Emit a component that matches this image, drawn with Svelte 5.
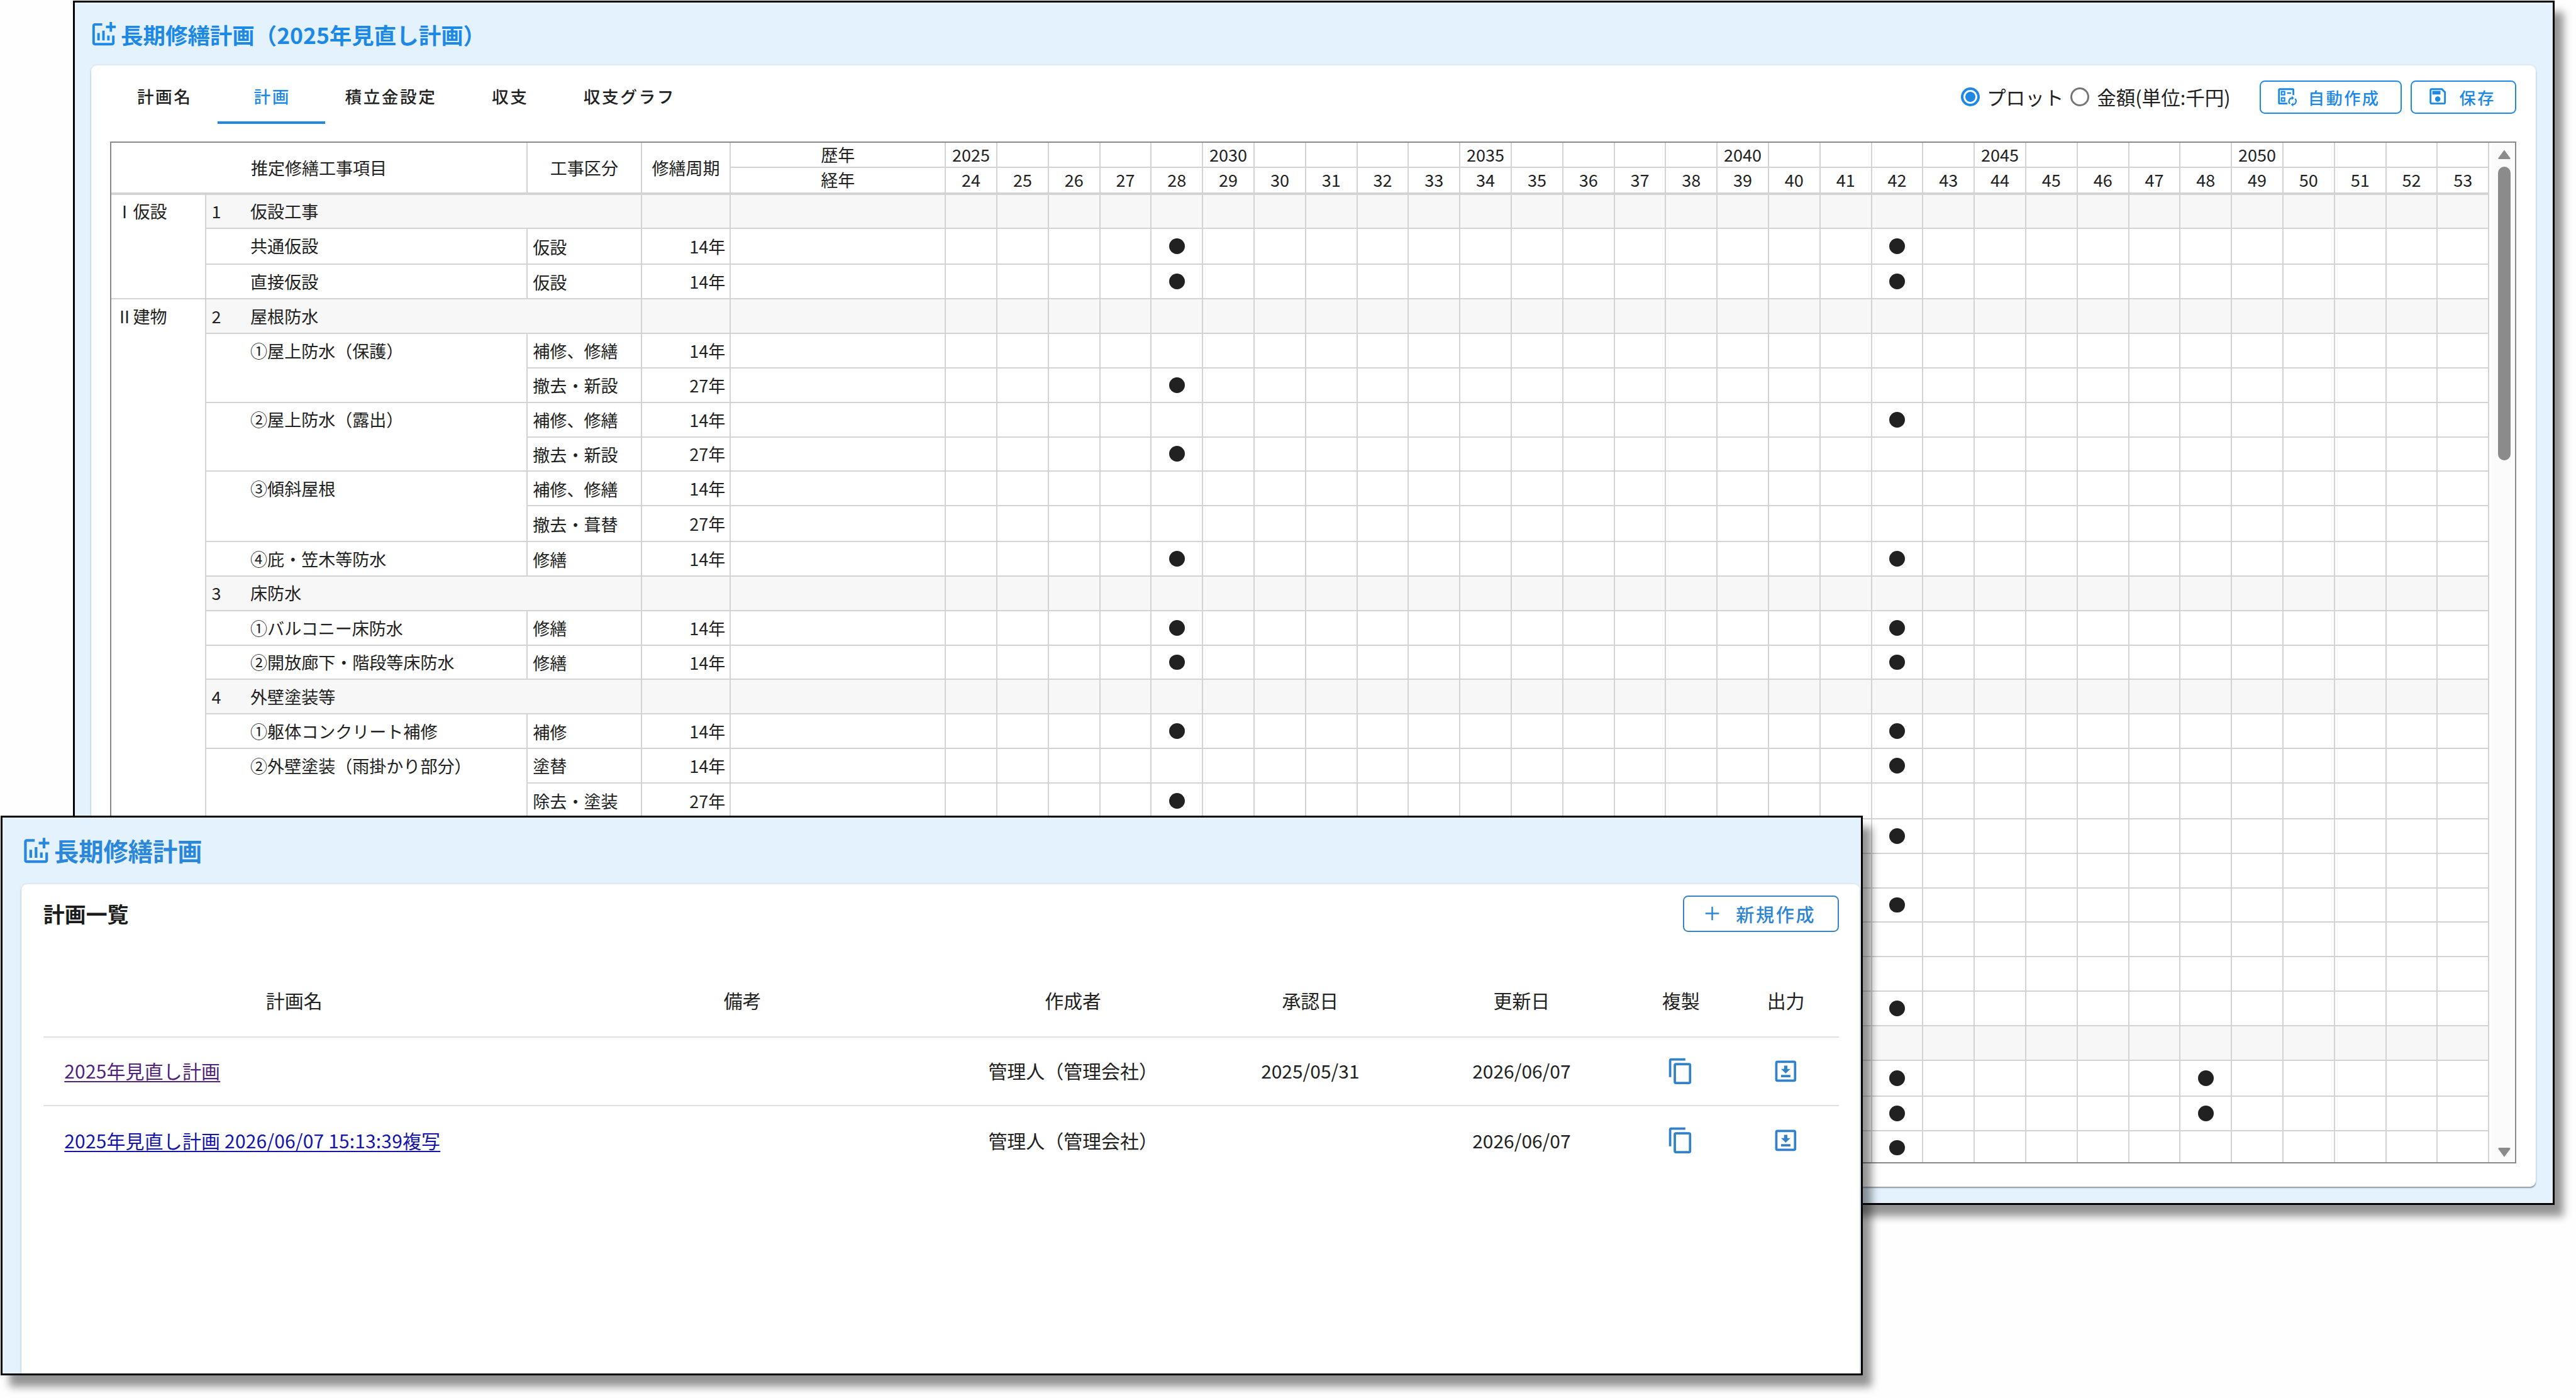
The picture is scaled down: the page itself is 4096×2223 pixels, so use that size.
<script>
  // s: rows the item cell spans, no: category number, p: plotted ages
  const rows = [
    { no: 1, name: '仮設工事' },
    { name: '共通仮設', s: 1, type: '仮設', cycle: 14, p: [28, 42] },
    { name: '直接仮設', s: 1, type: '仮設', cycle: 14, p: [28, 42] },
    { no: 2, name: '屋根防水' },
    { name: '①屋上防水（保護）', s: 2, type: '補修、修繕', cycle: 14, p: [] },
    { type: '撤去・新設', cycle: 27, p: [28] },
    { name: '②屋上防水（露出）', s: 2, type: '補修、修繕', cycle: 14, p: [42] },
    { type: '撤去・新設', cycle: 27, p: [28] },
    { name: '③傾斜屋根', s: 2, type: '補修、修繕', cycle: 14, p: [] },
    { type: '撤去・葺替', cycle: 27, p: [] },
    { name: '④庇・笠木等防水', s: 1, type: '修繕', cycle: 14, p: [28, 42] },
    { no: 3, name: '床防水' },
    { name: '①バルコニー床防水', s: 1, type: '修繕', cycle: 14, p: [28, 42] },
    { name: '②開放廊下・階段等床防水', s: 1, type: '修繕', cycle: 14, p: [28, 42] },
    { no: 4, name: '外壁塗装等' },
    { name: '①躯体コンクリート補修', s: 1, type: '補修', cycle: 14, p: [28, 42] },
    { name: '②外壁塗装（雨掛かり部分）', s: 2, type: '塗替', cycle: 14, p: [42] },
    { type: '除去・塗装', cycle: 27, p: [28] },
    { name: '', s: 2, p: [42] },
    { p: [] },
    { name: '', s: 2, p: [42] },
    { p: [] },
    { name: '', s: 1, p: [] },
    { name: '', s: 1, p: [42] },
    { no: '', name: '' },
    { name: '', s: 1, p: [42, 48] },
    { name: '', s: 1, p: [42, 48] },
    { name: '', s: 1, p: [42] },
  ]
  const sections = [
    { name: 'Ⅰ仮設', from: 1, span: 3 },
    { name: 'Ⅱ建物', from: 4, span: 25 },
  ]
  const ages = Array.from({ length: 30 }, (_, i) => 24 + i)
  const yearOf = (age) => ((age + 1) % 5 === 0 ? age + 2001 : '')
  // every eighth row is a little taller
  const rowHeights = rows.map((_, i) => (i % 8 === 1 ? '63.1px' : '60.6px')).join(' ')

  const tabs = ['計画名', '計画', '積立金設定', '収支', '収支グラフ']
  let activeTab = '計画'
  let mode = 'plot'

  const plans = [
    { name: '2025年見直し計画', visited: true, author: '管理人（管理会社）', approved: '2025/05/31', updated: '2026/06/07' },
    { name: '2025年見直し計画 2026/06/07 15:13:39複写', visited: false, author: '管理人（管理会社）', approved: '', updated: '2026/06/07' },
  ]
  const planHeads = ['計画名', '備考', '作成者', '承認日', '更新日', '複製', '出力']

  const chartIcon = 'M22 5v2h-3v3h-2V7h-3V5h3V2h2v3h3zm-3 14H5V5h6V3H5c-1.1 0-2 .9-2 2v14c0 1.1.9 2 2 2h14c1.1 0 2-.9 2-2v-6h-2v6zm-4-6v4h2v-4h-2zm-4 4h2V9h-2v8zm-2 0v-6H7v6h2z'
</script>

<div class="canvas">
  <section class="window plan">
    <h1 class="title">
      <svg viewBox="0 0 24 24"><path d={chartIcon} /></svg>
      <span>長期修繕計画（2025年見直し計画）</span>
    </h1>

    <div class="card">
      <div class="toolbar">
        <nav class="tabs">
          {#each tabs as tab}
            <button class="tab" class:active={tab === activeTab} on:click={() => (activeTab = tab)}>{tab}</button>
          {/each}
        </nav>
        <div class="tools">
          <button class="radio" class:on={mode === 'plot'} on:click={() => (mode = 'plot')}><i></i>プロット</button>
          <button class="radio" class:on={mode === 'amount'} on:click={() => (mode = 'amount')}><i></i>金額(単位:千円)</button>
          <button class="btn auto">
            <svg viewBox="0 0 24 24">
              <path d="M5 3h14a2 2 0 0 1 2 2v5.6h-2V5H5v14h8.4v2H5a2 2 0 0 1-2-2V5a2 2 0 0 1 2-2z" />
              <path d="M6 6h5v5H6zm1.5 1.5v2h2v-2zM6 13h5v5H6zm1.5 1.5v2h2v-2zM13 7.5h4.5v1.8H13z" fill-rule="evenodd" />
              <path d="M16.2 20.3a3.7 3.7 0 0 1 2.5-6.4M21.8 14.7a3.7 3.7 0 0 1-2.5 6.4" fill="none" stroke="currentColor" stroke-width="1.5" />
              <path d="M18.2 11.6v4.5l2.5-2.2zM19.8 18.9v4.5l-2.5-2.2z" />
            </svg>
            <span>自動作成</span>
          </button>
          <button class="btn save">
            <svg viewBox="0 0 24 24"><path d="M17 3H5C3.89 3 3 3.9 3 5V19C3 20.1 3.89 21 5 21H19C20.1 21 21 20.1 21 19V7L17 3M19 19H5V5H16.17L19 7.83V19M12 12C10.34 12 9 13.34 9 15S10.34 18 12 18 15 16.66 15 15 13.66 12 12 12M6 6H15V10H6V6Z" /></svg>
            <span>保存</span>
          </button>
        </div>
      </div>

      <div class="sheet">
        <div class="scroll">
          <div class="grid head">
            <div class="cell h-item">推定修繕工事項目</div>
            <div class="cell h-tall">工事区分</div>
            <div class="cell h-tall">修繕周期</div>
            <div class="cell upper">歴年</div>
            {#each ages as age}
              <div class="cell upper">{yearOf(age)}</div>
            {/each}
            <div class="cell lower">経年</div>
            {#each ages as age}
              <div class="cell lower">{age}</div>
            {/each}
          </div>

          <div class="grid body" style={`grid-template-rows: ${rowHeights};`}>
            {#each sections as sec}
              <div class="cell section" style={`grid-row: ${sec.from} / span ${sec.span};`}>{sec.name}</div>
            {/each}
            {#each rows as row, i}
              {#if row.no !== undefined}
                <div class="cell category shade" style={`grid-row: ${i + 1};`}><b>{row.no}</b>{row.name}</div>
              {:else}
                {#if row.s}
                  <div class="cell item" style={`grid-row: ${i + 1} / span ${row.s};`}>{row.name}</div>
                {/if}
                <div class="cell type" style={`grid-row: ${i + 1};`}>{row.type || ''}</div>
              {/if}
              <div class="cell cycle" class:shade={!row.p} style={`grid-row: ${i + 1};`}>{row.cycle ? row.cycle + '年' : ''}</div>
              <div class="cell blank" class:shade={!row.p} style={`grid-row: ${i + 1};`}></div>
              {#each ages as age, c}
                <div class="cell year" class:shade={!row.p} style={`grid-row: ${i + 1}; grid-column: ${c + 6};`}>
                  {#if row.p && row.p.includes(age)}<i class="dot"></i>{/if}
                </div>
              {/each}
            {/each}
          </div>
        </div>
        <div class="scrollbar">
          <svg class="arrow" viewBox="0 0 21 16"><path d="M10.5 .5L20.5 14q.4 2-1.5 2H2q-1.9 0-1.5-2z" /></svg>
          <div class="thumb"></div>
          <svg class="arrow down" viewBox="0 0 21 16"><path d="M10.5 15.5L20.5 2q.4-2-1.5-2H2Q.1 0 .5 2z" /></svg>
        </div>
      </div>
    </div>
  </section>

  <section class="window list">
    <h1 class="title">
      <svg viewBox="0 0 24 24"><path d={chartIcon} /></svg>
      <span>長期修繕計画</span>
    </h1>

    <div class="card">
      <div class="list-head">
        <h2>計画一覧</h2>
        <button class="btn create">
          <svg viewBox="0 0 24 24"><path d="M19 12.8h-6.2V19h-1.6v-6.2H5v-1.6h6.2V5h1.6v6.2H19z" /></svg>
          <span>新規作成</span>
        </button>
      </div>

      <div class="plans heads">
        {#each planHeads as head}
          <div>{head}</div>
        {/each}
      </div>
      {#each plans as plan}
        <div class="plans">
          <div class="name"><a href="#plan" class:visited={plan.visited}>{plan.name}</a></div>
          <div></div>
          <div>{plan.author}</div>
          <div>{plan.approved}</div>
          <div>{plan.updated}</div>
          <div>
            <svg viewBox="0 0 24 24"><path d="M19 21H8V7h11m0-2H8a2 2 0 0 0-2 2v14a2 2 0 0 0 2 2h11a2 2 0 0 0 2-2V7a2 2 0 0 0-2-2m-3-4H4a2 2 0 0 0-2 2v14h2V3h12V1z" /></svg>
          </div>
          <div>
            <svg viewBox="0 0 24 24"><path fill-rule="evenodd" d="M5 3h14a2 2 0 0 1 2 2v14a2 2 0 0 1-2 2H5a2 2 0 0 1-2-2V5a2 2 0 0 1 2-2zm0 2v14h14V5zM10.6 7.2h2.8V10H16l-4 4-4-4h2.6zM8 15.2h8v2H8z" /></svg>
          </div>
        </div>
      {/each}
    </div>
  </section>
</div>

<style>
  :global(body) {
    margin: 0;
    background: #fefefe;
    overflow: hidden;
  }

  .canvas {
    position: relative;
    width: 4528px;
    height: 2457px;
    zoom: 0.9046;
    overflow: hidden;
    font-family: "Noto Sans CJK JP", "Noto Sans", sans-serif;
    font-size: 29.9px;
    line-height: 1.4;
    color: #212121;
  }

  .canvas * {
    box-sizing: border-box;
  }

  button {
    font: inherit;
    color: inherit;
    background: none;
    border: 0;
    padding: 0;
    margin: 0;
    white-space: nowrap;
  }

  svg {
    display: block;
    flex: none;
    fill: currentColor;
  }

  .window {
    position: absolute;
    display: flex;
    flex-direction: column;
    border: 3.4px solid #000;
    background: #e3f2fd;
    box-shadow: 15px 20px 14px rgba(0, 0, 0, 0.42);
  }

  .plan {
    left: 128px;
    top: 1px;
    width: 4362px;
    height: 2117.5px;
    padding: 0 29.5px 29.5px;
  }

  .list {
    left: 1.3px;
    top: 1433.5px;
    width: 3272.7px;
    height: 984px;
    padding: 0 2px 0 33.5px;
  }

  .title {
    display: flex;
    align-items: center;
    flex: none;
    margin: 0;
    color: #1e88e5;
    font-weight: 700;
    white-space: nowrap;
  }

  .plan .title {
    height: 111px;
    font-size: 39.2px;
    padding: 2px 0 0;
  }

  .plan .title svg {
    width: 52px;
    height: 52px;
    margin: 0 4px 0 -4.5px;
  }

  .list .title {
    height: 117.5px;
    font-size: 43.4px;
    color: #2a87d9;
  }

  .list .title svg {
    width: 56px;
    height: 56px;
    margin: 0 4px 0 -3px;
  }

  .card {
    flex: 1;
    min-height: 0;
    display: flex;
    flex-direction: column;
    background: #fff;
    border-radius: 10px;
    box-shadow: 0 3px 2px -1px rgba(0, 0, 0, 0.35), 0 0 5px rgba(0, 0, 0, 0.1);
  }

  .plan .card {
    padding: 0 34.5px 41px 32.5px;
  }

  .toolbar {
    display: flex;
    justify-content: space-between;
    flex: none;
    height: 133.3px;
  }

  .tabs {
    display: flex;
    height: 102px;
  }

  .tab {
    min-width: 189px;
    padding: 9px 32px 0 35px;
    font-size: 29.5px;
    font-weight: 500;
    letter-spacing: 2.8px;
    border-bottom: 5.5px solid transparent;
  }

  .tab:nth-child(n + 4) {
    padding-left: 37px;
  }

  .tab.active {
    color: #1e88e5;
    border-bottom-color: #1e88e5;
  }

  .tools {
    display: flex;
    align-items: center;
    height: 110px;
  }

  .radio {
    display: flex;
    align-items: center;
    font-size: 33.8px;
    margin-right: 12px;
  }

  .radio i {
    width: 33.5px;
    height: 33.5px;
    margin-right: 13px;
    border: 3.5px solid #757575;
    border-radius: 50%;
  }

  .radio.on i {
    margin-right: 12px;
    border: 4.5px solid #1e88e5;
    background: radial-gradient(circle, #1e88e5 8.3px, transparent 9.3px);
  }

  .radio:nth-child(2) {
    margin-right: 51px;
  }

  .btn {
    display: flex;
    align-items: center;
    height: 58.5px;
    border: 2.3px solid #1e88e5;
    border-radius: 9px;
    color: #1e88e5;
    font-size: 29px;
    font-weight: 500;
    letter-spacing: 2.7px;
  }

  .btn span {
    padding-top: 2px;
  }

  .btn svg {
    width: 38px;
    height: 38px;
    margin-bottom: 3px;
  }

  .auto {
    width: 250px;
    padding-left: 26px;
    margin-right: 16px;
  }

  .save {
    width: 185px;
    padding-left: 26px;
  }

  .auto svg,
  .save svg {
    margin-right: 19px;
    overflow: visible;
  }

  .sheet {
    flex: 1;
    min-height: 0;
    display: flex;
    border: 2.3px solid #8a8a8a;
  }

  .scroll {
    flex: none;
    overflow: hidden;
  }

  .grid {
    display: grid;
    grid-template-columns: 167.6px 564.6px 200.5px 156.9px 377.8px repeat(30, 90.43px);
  }

  .head {
    grid-template-rows: 44.4px 47px;
  }

  .cell {
    display: flex;
    align-items: center;
    min-width: 0;
    border: 0 solid #d3d3d3;
    border-right-width: 2.3px;
    border-bottom-width: 2.3px;
    white-space: nowrap;
  }

  .head .cell {
    justify-content: center;
  }

  .h-item {
    grid-column: 1 / span 2;
    grid-row: 1 / span 2;
  }

  .h-tall {
    grid-row: 1 / span 2;
  }

  .head .h-item,
  .head .h-tall,
  .head .lower {
    border-bottom-width: 4.5px;
  }

  .head .h-item,
  .head .h-tall {
    padding-top: 2px;
  }

  .section,
  .item {
    align-items: flex-start;
    padding-top: 8.5px;
  }

  .section {
    grid-column: 1;
    padding-left: 8.5px;
  }

  .item {
    grid-column: 2;
    padding-left: 77px;
  }

  .category {
    grid-column: 2 / span 2;
    padding-left: 9px;
  }

  .category b {
    width: 68px;
    font-weight: 400;
  }

  .type {
    grid-column: 3;
    padding: 2px 0 0 9px;
  }

  .cycle {
    grid-column: 4;
    justify-content: flex-end;
    padding: 1px 8px 0 0;
  }

  .blank {
    grid-column: 5;
  }

  .year {
    justify-content: center;
  }

  .shade {
    background: #f7f7f7;
  }

  .dot {
    width: 27.5px;
    height: 27.5px;
    border-radius: 50%;
    background: #212121;
  }

  .scrollbar {
    flex: 1;
    display: flex;
    flex-direction: column;
    align-items: center;
    padding: 12px 0 8px 3px;
    margin-left: 4px;
    background: #fbfbfb;
    color: #8b8b8b;
  }

  .arrow {
    width: 22px;
    height: 17px;
  }

  .thumb {
    width: 22px;
    height: 516px;
    margin-top: 13px;
    border-radius: 11px;
    background: #8b8b8b;
  }

  .down {
    margin-top: auto;
  }

  .list .card {
    padding: 0 36.5px 0 38px;
    border-radius: 10px 10px 0 0;
    font-size: 33.1px;
  }

  .list-head {
    display: flex;
    justify-content: space-between;
    align-items: center;
    height: 103.5px;
  }

  h2 {
    margin: 0;
    font-size: 37.5px;
    font-weight: 700;
    color: #1c1c1c;
  }

  .create {
    width: 273.5px;
    height: 64.5px;
    padding-left: 28.5px;
    border-color: #3a83c0;
    color: #2f85d2;
    font-size: 32.2px;
    letter-spacing: 2.9px;
  }

  .create svg {
    width: 41px;
    height: 41px;
    margin: 0 21px 0 0;
  }

  .plans {
    display: grid;
    grid-template-columns: 882px 694px 468px 366px 377px 183px 186px;
    height: 120.4px;
    border-bottom: 2.3px solid #e0e0e0;
  }

  .plans:last-child {
    border-bottom: 0;
    padding-top: 1px;
  }

  .plans.heads {
    height: 166px;
    padding-top: 38px;
  }

  .plans > div {
    display: flex;
    align-items: center;
    justify-content: center;
    white-space: nowrap;
  }

  .plans > .name {
    justify-content: flex-start;
    padding-left: 37px;
    letter-spacing: 0.2px;
  }

  .plans svg {
    width: 49.5px;
    height: 49.5px;
    color: #3381c8;
  }

  a {
    color: #1414a8;
    text-decoration-thickness: 2.3px;
    text-underline-offset: 4px;
  }

  a.visited {
    color: #4f2478;
  }
</style>
